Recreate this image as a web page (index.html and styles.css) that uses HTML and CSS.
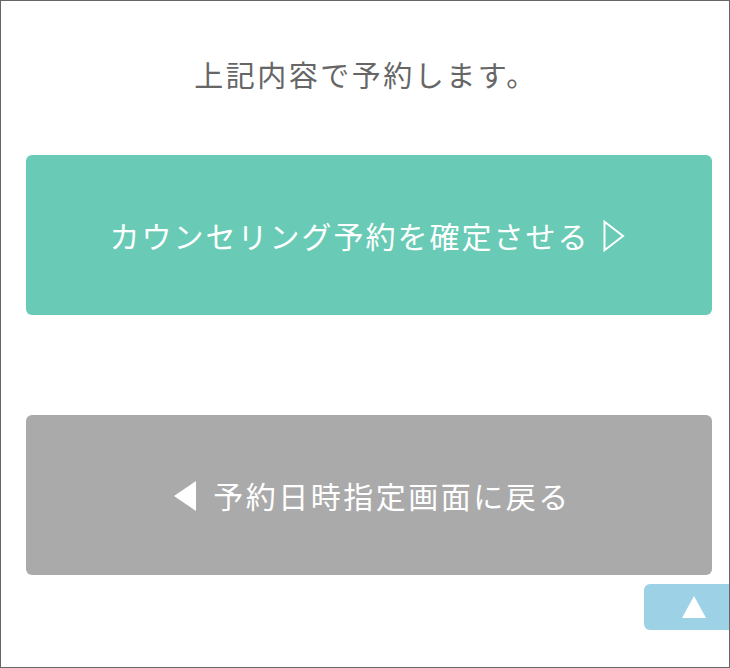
FILE: index.html
```html
<!DOCTYPE html>
<html lang="ja">
  <head>
    <meta charset="UTF-8" />
    <meta name="viewport" content="width=device-width, initial-scale=1.0" />
    <title>予約確認</title>
    <link rel="stylesheet" href="styles.css">
  </head>
  <body>
    <div class="page">
      <p class="lead">上記内容で予約します。</p>

      <!-- 確定ボタン -->
      <a class="btn btn-submit" href="#">
        <span>カウンセリング予約を確定させる</span>
        <svg class="arrow-next" width="22" height="32" viewBox="0 0 22 32">
          <polygon points="1.5,1.8 20,16 1.5,30.2" fill="none" stroke="#fff" stroke-width="2" stroke-linejoin="miter" />
        </svg>
      </a>

      <!-- 戻るボタン -->
      <a class="btn btn-back" href="#">
        <svg class="arrow-prev" width="22" height="30" viewBox="0 0 22 30">
          <polygon points="22,0 0,15 22,30" fill="#fff" />
        </svg>
        <span>予約日時指定画面に戻る</span>
      </a>

      <a class="page-top" href="#">
        <svg width="24" height="22" viewBox="0 0 24 22">
          <polygon points="12,0 24,22 0,22" fill="#fff" />
        </svg>
      </a>
    </div>
  </body>
</html>
```

FILE: styles.css
```css
body {
  margin: 0;
  padding: 0;
  background: #fff;
  font-family: "Noto Sans CJK JP", "Noto Sans", sans-serif;
}

.page {
  position: relative;
  box-sizing: border-box;
  height: 668px;
  border: 1px solid #666;
  padding: 0 17px 0 25px;
  overflow: hidden;
}

.lead {
  margin: 53px 0 0 -6px;
  height: 40px;
  line-height: 40px;
  font-size: 29px;
  letter-spacing: 2.5px;
  color: #666;
  text-align: center;
}

.btn {
  display: flex;
  align-items: center;
  justify-content: center;
  height: 160px;
  border-radius: 6px;
  color: #fff;
  font-size: 30px;
  letter-spacing: 2px;
  text-decoration: none;
}

.btn-submit {
  margin-top: 61px;
  padding-right: 4px;
  background: #69cbb5;
}

.btn-back {
  margin-top: 100px;
  padding-left: 7px;
  background: #aaaaaa;
}

.btn-back span {
  letter-spacing: 2.5px;
}

.arrow-next {
  margin-left: 13px;
  margin-top: 1px;
}

.arrow-prev {
  margin-right: 17px;
  margin-top: 1px;
}

.page-top {
  position: absolute;
  right: 0;
  top: 583px;
  width: 85px;
  height: 46px;
  border-radius: 6px 0 0 6px;
  background: #9dd1e6;
  display: flex;
  align-items: center;
  justify-content: center;
  padding-left: 14px;
  box-sizing: border-box;
}
```
